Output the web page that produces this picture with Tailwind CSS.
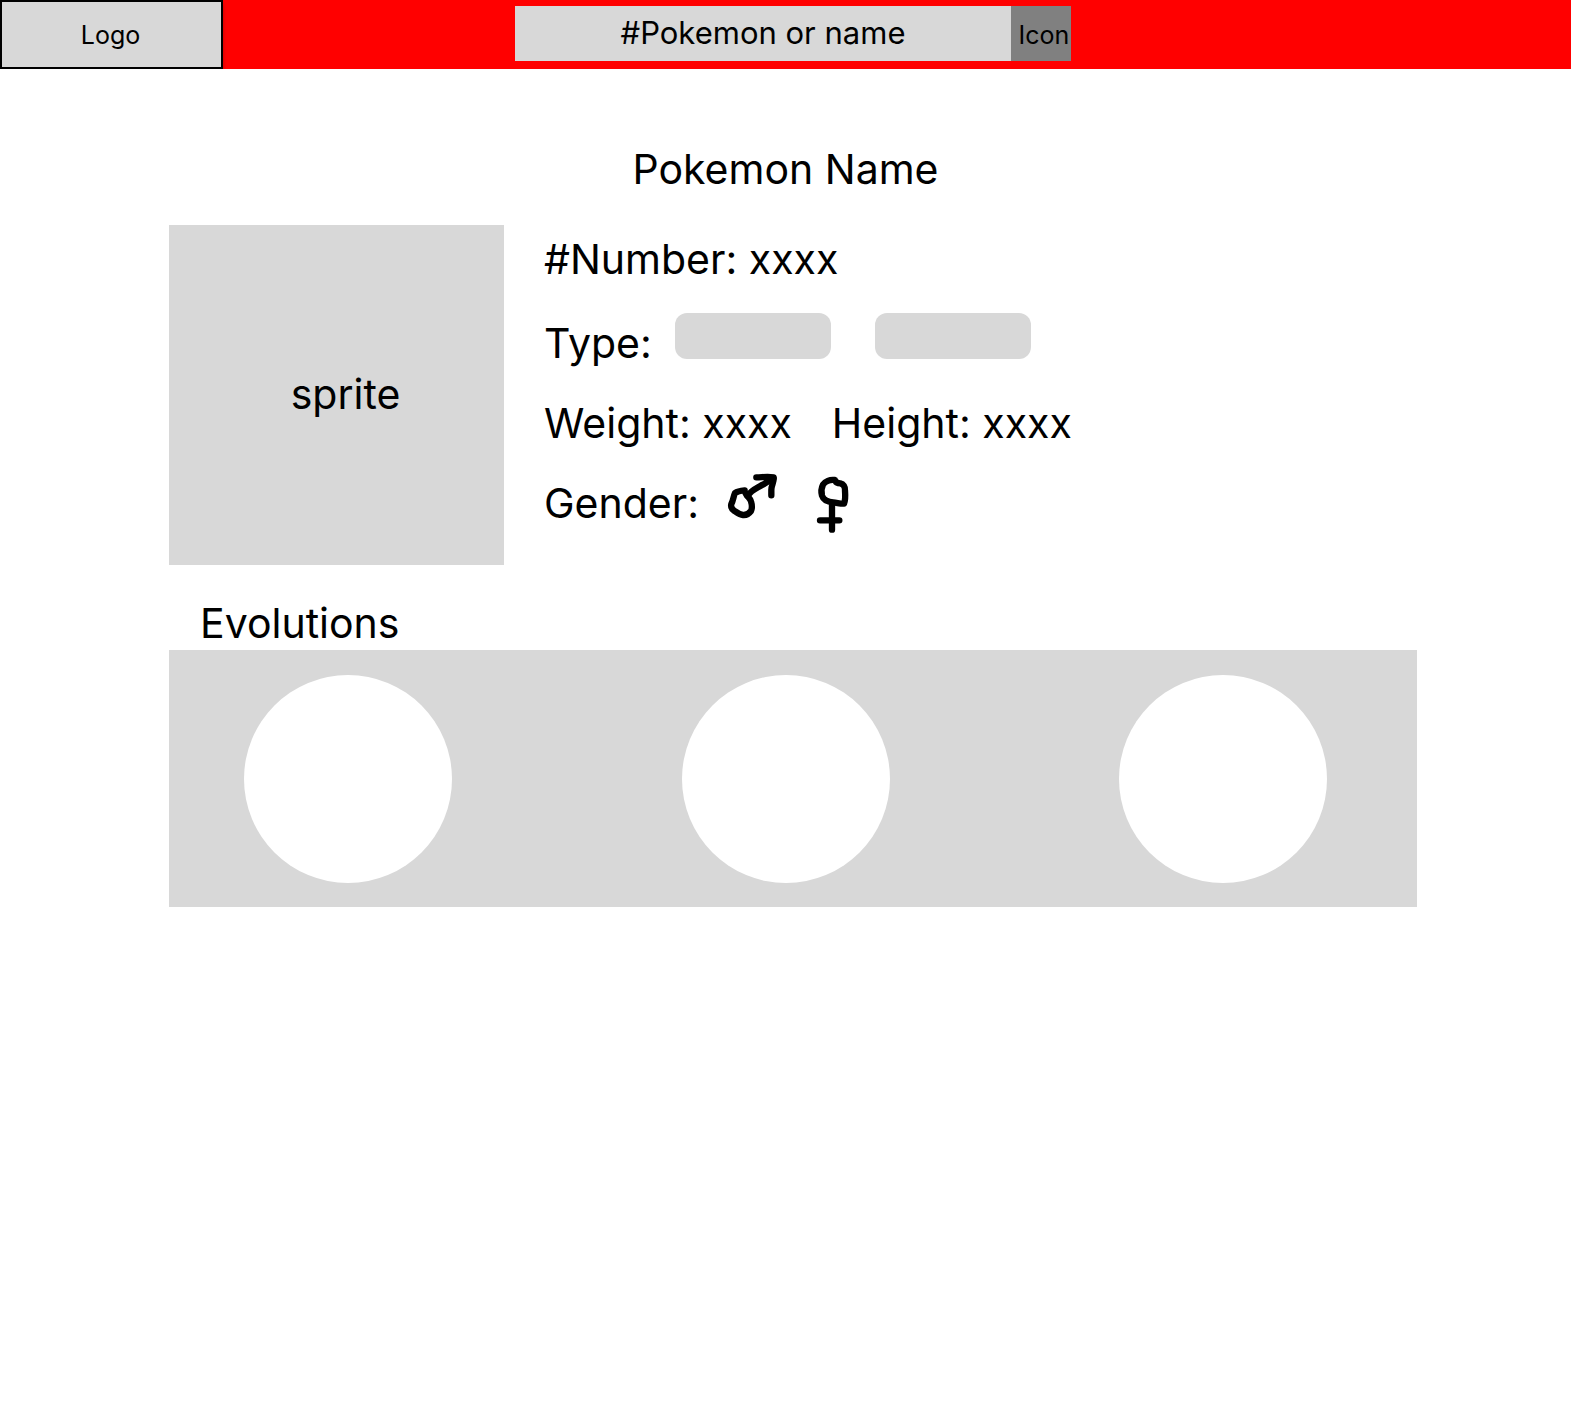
<!DOCTYPE html>
<html lang="en">
<head>
<meta charset="utf-8">
<meta name="viewport" content="width=device-width, initial-scale=1">
<title>Pokemon Name</title>
<script src="https://cdn.jsdelivr.net/npm/@tailwindcss/browser@4"></script>
</head>
<body class="min-h-screen bg-white font-['Inter',sans-serif] text-black">
  <header class="grid h-[69px] grid-cols-[223px_292fr_minmax(0,556px)_500fr] overflow-hidden bg-[#ff0000]">
    <a href="#" class="flex items-center justify-center border-2 border-black bg-[#d8d8d8] pt-0.5 pr-0.5 text-[25px] shadow-[0_4px_4px_rgba(0,0,0,0.25)]">Logo</a>
    <form role="search" class="col-start-3 mt-1.5 flex h-[55px]">
      <input type="text" aria-label="#Pokemon or name" placeholder="#Pokemon or name" class="min-w-0 flex-1 bg-[#d8d8d8] text-center text-[31px] text-black outline-none placeholder:text-black">
      <button type="button" class="w-[60px] bg-[#808080] pt-1 pl-1.5 text-[25px]">Icon</button>
    </form>
  </header>

  <main class="pt-[74px] pr-[154px] pl-[169px] text-[41px] leading-[52px]">
    <h1 class="-mr-[154px] -ml-[169px] text-center">Pokemon Name</h1>

    <section class="mt-[30px] flex gap-10">
      <div class="flex h-[340px] w-[335px] shrink-0 items-center justify-center bg-[#d8d8d8] pb-0.5 pl-[18px]">sprite</div>
      <div class="flex flex-col gap-7 pt-2">
        <p>#Number: xxxx</p>
        <div class="flex h-14">
          <span class="w-[131px] self-end">Type:</span>
          <ul class="flex gap-11">
            <li class="h-[46px] w-[156px] rounded-xl bg-[#d8d8d8]"></li>
            <li class="h-[46px] w-[156px] rounded-xl bg-[#d8d8d8]"></li>
          </ul>
        </div>
        <div class="flex gap-10">
          <p>Weight: xxxx</p>
          <p>Height: xxxx</p>
        </div>
        <div class="flex h-[52px] items-center">
          <span class="w-[182px]">Gender:</span>
          <svg class="h-[60px] w-[52px] overflow-visible" viewBox="48 39 156 180" fill="none" stroke="#000" stroke-width="19" stroke-linecap="round" stroke-linejoin="round" role="img" aria-label="Male">
            <path d="M104 91C94 92 82 94 75 99C70 110 70 121 64 132C62 140 66 147 71 151C80 157 88 164 99 165C109 166 117 161 123 153C127 144 126 134 123 124C121 114 111 110 106 98"/>
            <path d="M113 108C122 91 140 85 156 75C168 70 177 60 190 55"/>
            <path d="M139 52C156 52 173 49 191 52C193 65 184 75 184 90V106"/>
          </svg>
          <svg class="ml-[37px] h-[60px] w-[35px] overflow-visible" viewBox="315 39 105 180" fill="none" stroke="#000" stroke-width="19" stroke-linecap="round" stroke-linejoin="round" role="img" aria-label="Female">
            <path d="M374 60C360 58 345 64 339 74C334 84 333 96 336 107C340 120 355 126 370 127C381 128 393 132 402 131C407 119 406 105 405 92C406 80 400 72 391 70C383 70 377 67 374 60"/>
            <path d="M366 131V209M330 181H388"/>
          </svg>
        </div>
      </div>
    </section>

    <section class="mt-8">
      <h2 class="pl-[31px]">Evolutions</h2>
      <div class="mt-px flex h-[257px] items-center justify-between bg-[#d8d8d8] pr-[90px] pl-[75px]">
        <div class="size-[208px] rounded-full bg-white"></div>
        <div class="size-[208px] rounded-full bg-white"></div>
        <div class="size-[208px] rounded-full bg-white"></div>
      </div>
    </section>
  </main>
</body>
</html>
